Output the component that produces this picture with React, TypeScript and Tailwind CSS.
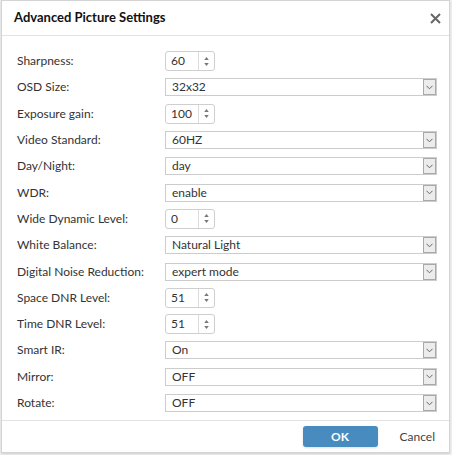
import React from "react";

type Row =
  | { label: string; kind: "spin"; value: string }
  | { label: string; kind: "select"; value: string };

const rows: Row[] = [
  { label: "Sharpness:", kind: "spin", value: "60" },
  { label: "OSD Size:", kind: "select", value: "32x32" },
  { label: "Exposure gain:", kind: "spin", value: "100" },
  { label: "Video Standard:", kind: "select", value: "60HZ" },
  { label: "Day/Night:", kind: "select", value: "day" },
  { label: "WDR:", kind: "select", value: "enable" },
  { label: "Wide Dynamic Level:", kind: "spin", value: "0" },
  { label: "White Balance:", kind: "select", value: "Natural Light" },
  { label: "Digital Noise Reduction:", kind: "select", value: "expert mode" },
  { label: "Space DNR Level:", kind: "spin", value: "51" },
  { label: "Time DNR Level:", kind: "spin", value: "51" },
  { label: "Smart IR:", kind: "select", value: "On" },
  { label: "Mirror:", kind: "select", value: "OFF" },
  { label: "Rotate:", kind: "select", value: "OFF" },
];

function Spinner({ value }: { value: string }) {
  return (
    <div className="flex h-[20px] w-[50px] rounded-[3px] border border-[#cfcfcf] bg-white">
      <div className="flex flex-1 items-center pl-[5px] text-[12px] text-[#333]">{value}</div>
      <div className="flex w-[16px] flex-col items-center justify-center gap-[3px] border-l border-[#dcdcdc]">
        <svg width="5" height="3" viewBox="0 0 6 4">
          <path d="M0 4 L3 0 L6 4 Z" fill="#777" />
        </svg>
        <svg width="5" height="3" viewBox="0 0 6 4">
          <path d="M0 0 L6 0 L3 4 Z" fill="#777" />
        </svg>
      </div>
    </div>
  );
}

function Select({ value }: { value: string }) {
  return (
    <div className="flex h-[18px] w-[272px] border border-[#cccccc] bg-white">
      <div className="flex flex-1 items-center pl-[6px] text-[12px] text-[#333]">{value}</div>
      <div className="flex w-[13px] items-center justify-center border border-[#a9a9a9] bg-[#ececec]">
        <svg width="7" height="5" viewBox="0 0 7 5">
          <path d="M0.5 0.8 L3.5 3.8 L6.5 0.8" fill="none" stroke="#666" strokeWidth="1" />
        </svg>
      </div>
    </div>
  );
}

export default function App() {
  return (
    <div
      className="relative h-[455px] w-[452px] bg-[#f0f0f0]"
      style={{ fontFamily: "Lato, 'Open Sans', sans-serif" }}
    >
      <div className="absolute left-[1px] top-0 flex h-[453px] w-[449px] flex-col border border-[#d4d4d4] bg-white shadow-sm">
        {/* header */}
        <div className="flex h-[35px] shrink-0 items-center justify-between border-b border-[#e3e3e3] pl-[12px] pr-[8px]">
          <h1 className="text-[13px] font-bold text-[#111]">Advanced Picture Settings</h1>
          <svg width="11" height="11" viewBox="0 0 11 11">
            <path d="M1 1 L10 10 M10 1 L1 10" stroke="#666" strokeWidth="2" />
          </svg>
        </div>

        {/* body */}
        <div className="flex flex-1 flex-col pt-[12px]">
          {rows.map((r) => (
            <div key={r.label} className="flex h-[26.3px] items-center">
              <div className="w-[163px] pl-[15px] text-[12px] text-[#333]">{r.label}</div>
              {r.kind === "spin" ? <Spinner value={r.value} /> : <Select value={r.value} />}
            </div>
          ))}
        </div>

        {/* footer */}
        <div className="flex h-[32px] shrink-0 items-center justify-end border-t border-[#e3e3e3] pr-[14px]">
          <button className="h-[21px] w-[75px] rounded-[3px] bg-[#478bbf] text-[12px] font-bold text-white shadow-sm">
            OK
          </button>
          <button className="ml-[22px] text-[12px] text-[#444]">Cancel</button>
        </div>
      </div>
    </div>
  );
}
